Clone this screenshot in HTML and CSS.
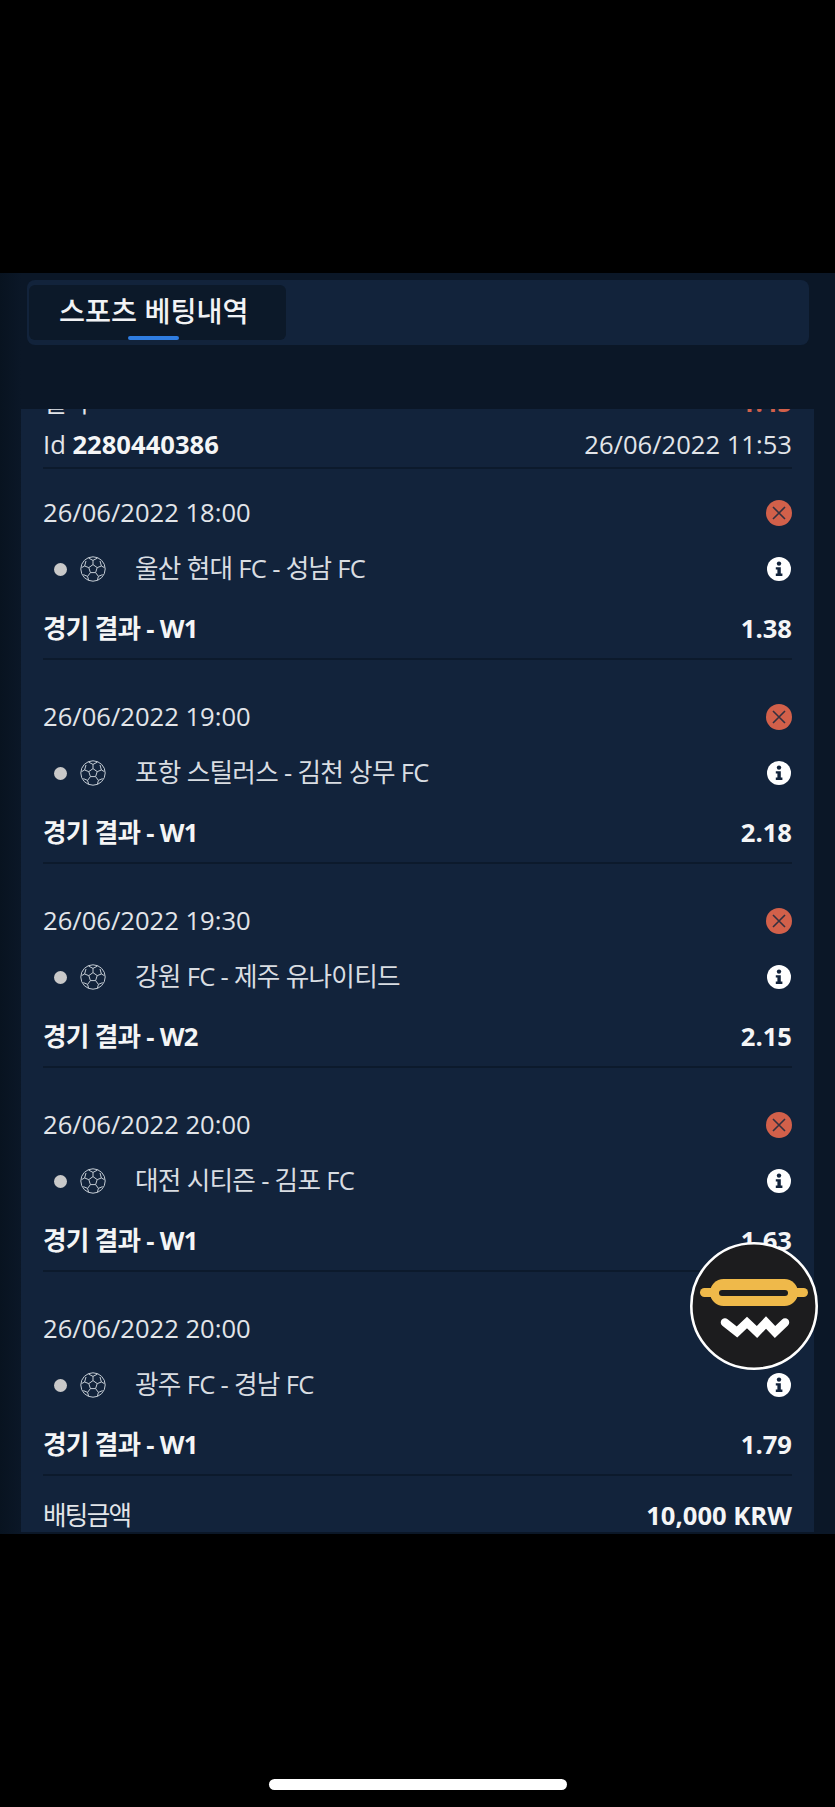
FILE: index.html
```html
<!DOCTYPE html>
<html lang="ko">
<head>
<meta charset="utf-8">
<title>스포츠 베팅내역</title>
<link rel="stylesheet" href="styles.css">
</head>
<body>
<svg class="defs" width="0" height="0" aria-hidden="true">
  <symbol id="ball" viewBox="0 0 26 26">
    <g fill="none" stroke="#c4ccd4" stroke-width="1" stroke-linejoin="round">
      <circle cx="13" cy="13" r="12.2"/>
      <path d="M13 8.6 17.2 11.6 15.6 16.6H10.4L8.8 11.6Z"/>
      <path d="M13 8.6V4.4L8.4 2M13 4.4 17.6 2M17.2 11.6 21.4 10 24.4 11.6M21.4 10 20 5M15.6 16.6 18.4 20.4 17.4 24.2M18.4 20.4 22.6 18.6M10.4 16.6 7.6 20.4 8.6 24.2M7.6 20.4 3.4 18.6M8.8 11.6 4.6 10 1.6 11.6M4.6 10 6 5"/>
    </g>
  </symbol>
  <symbol id="lost" viewBox="0 0 26 26">
    <circle cx="13" cy="13" r="13" fill="#d2604a"/>
    <path d="M7 7 19 19M19 7 7 19" stroke="#34303f" stroke-width="1.6" fill="none"/>
  </symbol>
  <symbol id="info" viewBox="0 0 24 24">
    <circle cx="12" cy="12" r="12" fill="#fff"/>
    <circle cx="12" cy="6.6" r="2.2" fill="#12233b"/>
    <path d="M8.8 10.2H13.8V16.6H15.4V19H8.8V16.6H10.4V12.6H8.8Z" fill="#12233b"/>
  </symbol>
</svg>

<div class="top-bar"></div>
<main class="screen">
  <nav class="tabs"><div class="tab">스포츠 베팅내역<span class="tab-line"></span></div></nav>
  <section class="card">
    <div class="line clipped"><span>결과</span><b class="red">1.45</b></div>
    <div class="line id-row"><span>Id <b>2280440386</b></span><span>26/06/2022 11:53</span></div>

    <article class="bet first">
      <div class="line"><span>26/06/2022 18:00</span><svg class="ic-lost"><use href="#lost"/></svg></div>
      <div class="line team"><span class="dot"></span><svg class="ic-ball"><use href="#ball"/></svg><span class="name">울산 현대 FC - 성남 FC</span><svg class="ic-info"><use href="#info"/></svg></div>
      <div class="line market"><span class="pick">경기 결과 - W1</span><span>1.38</span></div>
    </article>
    <article class="bet">
      <div class="line"><span>26/06/2022 19:00</span><svg class="ic-lost"><use href="#lost"/></svg></div>
      <div class="line team"><span class="dot"></span><svg class="ic-ball"><use href="#ball"/></svg><span class="name">포항 스틸러스 - 김천 상무 FC</span><svg class="ic-info"><use href="#info"/></svg></div>
      <div class="line market"><span class="pick">경기 결과 - W1</span><span>2.18</span></div>
    </article>
    <article class="bet">
      <div class="line"><span>26/06/2022 19:30</span><svg class="ic-lost"><use href="#lost"/></svg></div>
      <div class="line team"><span class="dot"></span><svg class="ic-ball"><use href="#ball"/></svg><span class="name">강원 FC - 제주 유나이티드</span><svg class="ic-info"><use href="#info"/></svg></div>
      <div class="line market"><span class="pick">경기 결과 - W2</span><span>2.15</span></div>
    </article>
    <article class="bet">
      <div class="line"><span>26/06/2022 20:00</span><svg class="ic-lost"><use href="#lost"/></svg></div>
      <div class="line team"><span class="dot"></span><svg class="ic-ball"><use href="#ball"/></svg><span class="name">대전 시티즌 - 김포 FC</span><svg class="ic-info"><use href="#info"/></svg></div>
      <div class="line market"><span class="pick">경기 결과 - W1</span><span>1.63</span></div>
    </article>
    <article class="bet">
      <div class="line"><span>26/06/2022 20:00</span><svg class="ic-lost"><use href="#lost"/></svg></div>
      <div class="line team"><span class="dot"></span><svg class="ic-ball"><use href="#ball"/></svg><span class="name">광주 FC - 경남 FC</span><svg class="ic-info"><use href="#info"/></svg></div>
      <div class="line market"><span class="pick">경기 결과 - W1</span><span>1.79</span></div>
    </article>

    <div class="line total"><span class="stake">배팅금액</span><b>10,000 KRW</b></div>
  </section>

  <div class="fab">
    <svg viewBox="0 0 128 128" width="128" height="128">
      <circle cx="64" cy="64" r="62.7" fill="#1c1c1e" stroke="#fff" stroke-width="2.6"/>
      <rect x="10" y="46" width="108" height="9" rx="4.5" fill="#efb94a"/>
      <rect x="20" y="37" width="88" height="27" rx="13.5" fill="#efb94a"/>
      <rect x="29" y="48" width="69" height="6" rx="3" fill="#1c1c1e"/>
      <path d="M35 80.5 47 90 57 80.5 67 90 76 80.5 85 90 95 80.5" fill="none" stroke="#fff" stroke-width="8.5" stroke-linecap="round" stroke-linejoin="miter"/>
    </svg>
  </div>
</main>
<footer class="bottom-bar"><span class="home"></span></footer>
</body>
</html>
```

FILE: styles.css
```css
* { box-sizing: border-box; }
html, body { margin: 0; padding: 0; }
body {
  width: 835px;
  height: 1807px;
  overflow: hidden;
  background: #000;
  color: #e2e5e9;
  font-family: "Open Sans", "Noto Sans CJK KR", sans-serif;
  font-size: 25.6px;
}
.defs { display: block; width: 0; height: 0; }
.top-bar { height: 273px; background: #000; }
.screen {
  position: relative;
  height: 1261px;
  padding-top: 7px;
  background: linear-gradient(90deg, #081320 0, #0b1727 21px);
}
.tabs {
  width: 782px;
  height: 65px;
  margin-left: 27px;
  padding: 5px 2px;
  border-radius: 8px;
  background: #12233b;
}
.tab {
  position: relative;
  width: 257px;
  height: 55px;
  padding-left: 30px;
  border-radius: 6px;
  background: #0c1929;
  color: #f2f3f5;
  font-size: 28.3px;
  font-weight: 500;
  line-height: 53px;
}
.tab-line {
  position: absolute;
  left: 99px;
  bottom: 0;
  width: 51px;
  height: 4px;
  border-radius: 2px;
  background: #2f7de1;
}
.card {
  width: 793px;
  height: 1123px;
  margin: 64px 0 0 21px;
  padding: 0 22px;
  overflow: hidden;
  background: #12233b;
}
.line {
  display: flex;
  align-items: center;
  justify-content: space-between;
  height: 34px;
  padding-top: 2px;
  line-height: 32px;
  white-space: nowrap;
}
.line b, .market { font-weight: 700; color: #f4f5f6; }
.clipped { margin-top: -24px; }
.line .red { color: #d2604a; }
.id-row {
  height: 42px;
  margin-top: 8px;
  padding-bottom: 6px;
  border-bottom: 2px solid #0c1a2c;
}
.bet {
  padding: 39.5px 0 12.5px;
  border-bottom: 2px solid #0c1a2c;
}
.bet.first { padding-top: 26px; }
.team { margin-top: 22px; justify-content: flex-start; color: #d9dde2; }
.market { margin-top: 26px; }
.pick { letter-spacing: -0.7px; }
.stake { letter-spacing: -1.7px; }
.dot {
  width: 13px;
  height: 13px;
  margin-left: 11px;
  border-radius: 50%;
  background: #c9c9c9;
}
.ic-ball { width: 26px; height: 26px; margin-left: 13px; }
.ic-lost { width: 26px; height: 26px; }
.ic-info { width: 24px; height: 24px; margin-left: auto; margin-right: 1px; }
.name { margin-left: 29px; letter-spacing: -0.7px; }
.total { margin-top: 22px; }
.fab {
  position: absolute;
  left: 690px;
  top: 969px;
  width: 128px;
  height: 128px;
}
.bottom-bar { height: 273px; position: relative; }
.home {
  position: absolute;
  left: 269px;
  top: 245px;
  width: 298px;
  height: 11px;
  border-radius: 6px;
  background: #fff;
}
```
